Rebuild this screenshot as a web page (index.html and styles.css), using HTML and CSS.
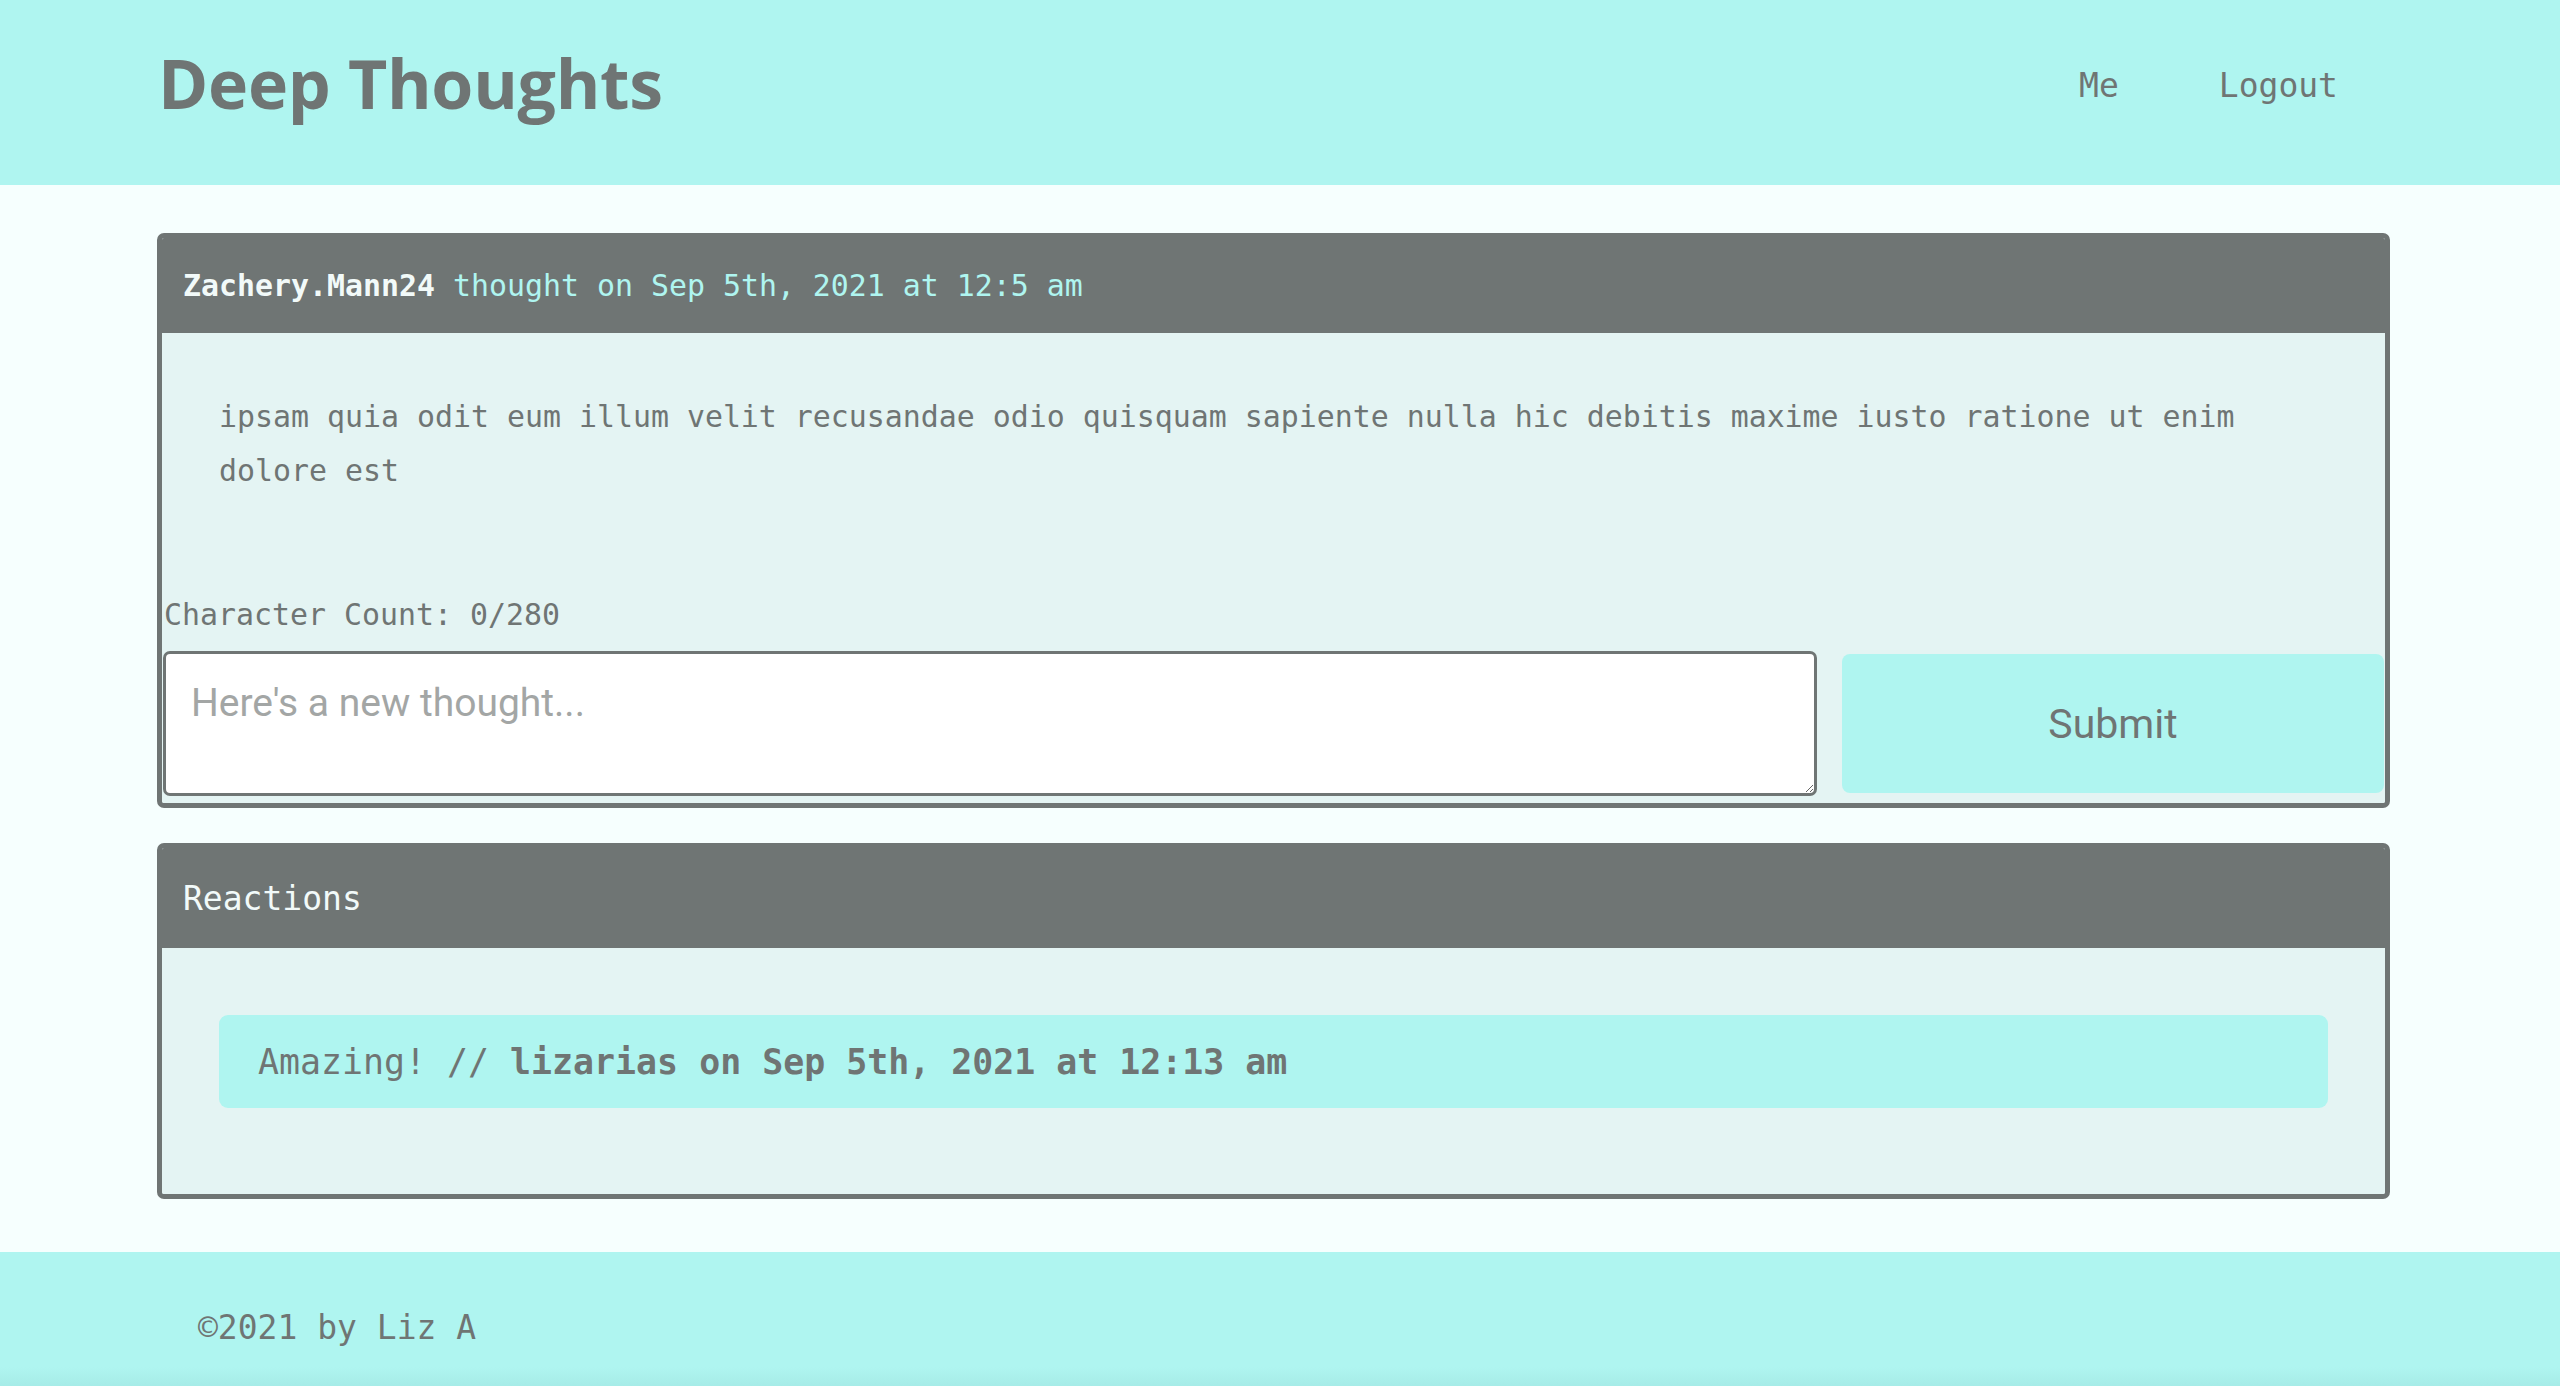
FILE: index.html
```html
<!DOCTYPE html>
<html lang="en">
<head>
<meta charset="utf-8">
<title>Deep Thoughts</title>
<link rel="stylesheet" href="styles.css">
</head>
<body>
<header class="site-header">
  <h1 class="brand">Deep Thoughts</h1>
  <nav class="nav">
    <a class="nav-link" href="#">Me</a>
    <a class="nav-link" href="#">Logout</a>
  </nav>
</header>
<main class="main">
  <section class="card">
    <div class="card-header">
      <span class="username">Zachery.Mann24</span>&nbsp;<span class="meta">thought on Sep 5th, 2021 at 12:5 am</span>
    </div>
    <div class="card-body">
      <p class="thought-text">ipsam quia odit eum illum velit recusandae odio quisquam sapiente nulla hic debitis maxime iusto ratione ut enim dolore est</p>
      <p class="char-count">Character Count: 0/280</p>
      <form class="reaction-form">
        <textarea class="reaction-input" placeholder="Here's a new thought..."></textarea>
        <button class="submit-btn" type="button">Submit</button>
      </form>
    </div>
  </section>
  <section class="card">
    <div class="card-header reactions-title">Reactions</div>
    <div class="card-body reactions-body">
      <p class="reaction-pill">Amazing! // <strong>lizarias on Sep 5th, 2021 at 12:13 am</strong></p>
    </div>
  </section>
</main>
<footer class="site-footer">
  <p class="footer-text">©2021 by Liz A</p>
</footer>
</body>
</html>
```
FILE: styles.css
```css
* { box-sizing: border-box; }
html, body { margin: 0; padding: 0; }
body {
  background: #f6fffe;
  color: #6f7574;
  font-family: "DejaVu Sans Mono", "Liberation Mono", monospace;
  min-height: 1386px;
  display: flex;
  flex-direction: column;
}
.site-header {
  background: #aff5f0;
  height: 185px;
  display: flex;
  align-items: center;
  justify-content: space-between;
  padding: 0 222px 20px 158px;
}
.brand {
  margin: 0;
  font-family: "Open Sans", "Liberation Sans", sans-serif;
  font-weight: 700;
  font-size: 68px;
  letter-spacing: -0.3px;
  color: #6f7574;
}
.nav { display: flex; gap: 100px; padding-top: 6px; }
.nav-link {
  color: #6f7574;
  text-decoration: none;
  font-size: 33px;
}
.main {
  padding: 48px 170px 53px 157px;
  display: flex;
  flex-direction: column;
  gap: 35px;
  flex: 1;
}
.card {
  border: 5px solid #6f7574;
  border-radius: 7px;
  background: #e4f4f3;
  overflow: hidden;
}
.card-header {
  background: #6f7574;
  height: 95px;
  display: flex;
  align-items: center;
  padding: 0 21px;
  font-size: 29.9px;
}
.username { color: #f2faf9; font-weight: 700; }
.meta { color: #aff5f0; }
.card-body { background: #e4f4f3; }
.thought-text {
  margin: 0;
  padding: 57px 57px 0 57px;
  font-size: 29.9px;
  line-height: 54px;
}
.char-count {
  margin: 0;
  padding: 99px 0 0 2px;
  font-size: 29.9px;
  line-height: 36px;
  height: 135px;
}
.reaction-form {
  display: flex;
  gap: 25px;
  padding-top: 18px;
  padding-bottom: 7px;
  padding-left: 1px;
  align-items: flex-start;
}
.reaction-input {
  flex: 0 0 1654px;
  height: 145px;
  border: 3px solid #6f7574;
  border-radius: 7px;
  background: #ffffff;
  padding: 26px 25px 20px;
  font-family: Roboto, "Liberation Sans", sans-serif;
  font-size: 39px;
  color: #6f7574;
  resize: vertical;
}
.reaction-input::placeholder { color: #a3a6a5; }
.submit-btn {
  flex: 1;
  margin-top: 3px;
  margin-right: 1px;
  height: 139px;
  border: none;
  border-radius: 8px;
  background: #aff5f0;
  color: #6f7574;
  font-family: Roboto, "Liberation Sans", sans-serif;
  font-size: 41px;
  padding-top: 2px;
}
.reactions-title {
  height: 100px;
  color: #f2faf9;
  font-size: 33px;
}
.reactions-body {
  padding: 67px 57px 86px 57px;
}
.reaction-pill {
  margin: 0;
  background: #aff5f0;
  border-radius: 9px;
  height: 93px;
  display: flex;
  align-items: center;
  padding: 0 39px;
  font-size: 34.9px;
  white-space: pre;
}
.reaction-pill strong { font-weight: 700; }
.site-footer {
  background: linear-gradient(#aff5f0 0, #aff5f0 85%, #a6ebe7 100%);
  height: 135px;
  display: flex;
  align-items: center;
  padding: 0 198px;
}
.footer-text {
  margin: 0;
  font-size: 33px;
  padding-top: 16px;
}
```
